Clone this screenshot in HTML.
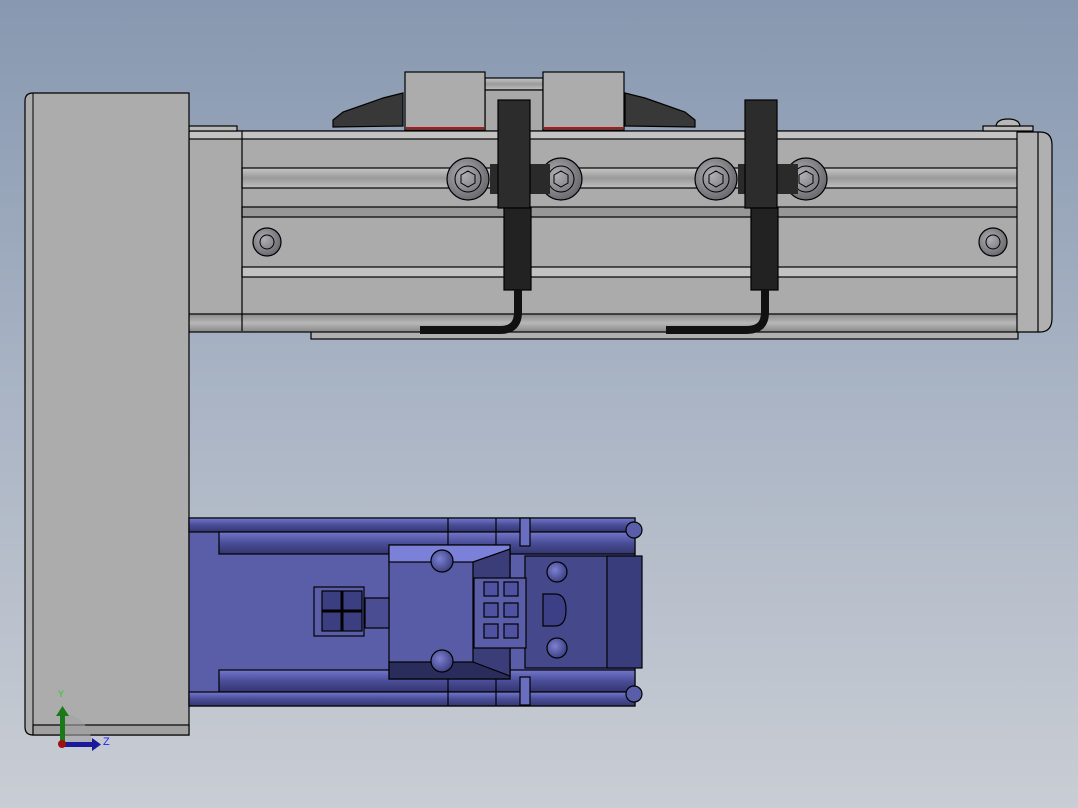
<!DOCTYPE html>
<html><head><meta charset="utf-8"><style>
html,body{margin:0;padding:0;width:1078px;height:808px;overflow:hidden}
body{background:linear-gradient(#8798b0,#a7b2c3 45%,#c9cdd4)}
svg{position:absolute;left:0;top:0}
</style></head><body>
<svg width="1078" height="808" viewBox="0 0 1078 808" xmlns="http://www.w3.org/2000/svg">
<defs>
<linearGradient id="gv" x1="0" y1="0" x2="0" y2="1"><stop offset="0" stop-color="#c8c8c8"/><stop offset=".5" stop-color="#9a9a9a"/><stop offset="1" stop-color="#c0c0c0"/></linearGradient>
<linearGradient id="gb" x1="0" y1="0" x2="0" y2="1"><stop offset="0" stop-color="#8a8a8a"/><stop offset=".5" stop-color="#b8b8b8"/><stop offset="1" stop-color="#888"/></linearGradient>
<linearGradient id="bb" x1="0" y1="0" x2="0" y2="1"><stop offset="0" stop-color="#7478cc"/><stop offset=".5" stop-color="#4a4d98"/><stop offset="1" stop-color="#33366e"/></linearGradient>
<radialGradient id="bolt" cx=".4" cy=".4" r=".7"><stop offset="0" stop-color="#b0b0b4"/><stop offset="1" stop-color="#606066"/></radialGradient>
<radialGradient id="bbolt" cx=".4" cy=".4" r=".7"><stop offset="0" stop-color="#7c80d0"/><stop offset="1" stop-color="#35387a"/></radialGradient>
</defs>
<g stroke="#000" stroke-width="1.2">
<!-- bottom plate -->
<rect x="311" y="318" width="707" height="21" fill="#b0b0b0"/>
<!-- carriage blocks -->
<rect x="485" y="78" width="58" height="12" fill="url(#gv)"/>
<rect x="485" y="90" width="58" height="48" fill="#a8a8a8"/>
<rect x="405" y="72" width="80" height="58" fill="#acacac"/>
<rect x="543" y="72" width="81" height="58" fill="#acacac"/>
<line x1="406" y1="128" x2="484" y2="128" stroke="#b01818" stroke-width="2"/>
<line x1="544" y1="128" x2="623" y2="128" stroke="#b01818" stroke-width="2"/>
<path d="M403 93 L383 98 L343 112 L333 120 L333 127 L403 126 Z" fill="#383838"/>
<path d="M625 93 L645 98 L685 112 L695 120 L695 127 L625 126 Z" fill="#383838"/>
<!-- rail -->
<rect x="189" y="131" width="830" height="200" fill="#ababab"/>
<rect x="189" y="131" width="830" height="8" fill="#c4c4c4"/>
<rect x="242" y="168" width="777" height="20" fill="url(#gv)"/>
<rect x="242" y="207" width="777" height="10" fill="#979797"/>
<rect x="242" y="267" width="777" height="10" fill="#c2c2c2"/>
<rect x="189" y="314" width="830" height="18" fill="url(#gb)"/>
<line x1="242" y1="131" x2="242" y2="331"/>
<path d="M1017 132 H1040 Q1052 132 1052 145 V318 Q1052 332 1040 332 H1017 Z" fill="#b0b0b0"/>
<line x1="1038" y1="132" x2="1038" y2="332"/>
<rect x="189" y="126" width="48" height="5" fill="#b8b8b8"/>
<rect x="983" y="126" width="50" height="5" fill="#b8b8b8"/>
<path d="M996 126 Q997 119 1008 119 Q1019 119 1020 126 Z" fill="#b8b8b8"/>
<!-- left plate -->
<path d="M33 93 H189 V735 H33 Q25 735 25 727 V101 Q25 93 33 93 Z" fill="#acacac"/>
<line x1="33" y1="93" x2="33" y2="735" stroke-width="1"/>
<rect x="33" y="725" width="156" height="10" fill="#a0a0a0"/>
<!-- bolts -->
<g fill="url(#bolt)">
<circle cx="468" cy="179" r="21"/><circle cx="561" cy="179" r="21"/>
<circle cx="716" cy="179" r="21"/><circle cx="806" cy="179" r="21"/>
<circle cx="267" cy="242" r="14"/><circle cx="993" cy="242" r="14"/>
</g>
<g fill="none" stroke-width="1">
<circle cx="468" cy="179" r="13"/><circle cx="561" cy="179" r="13"/><circle cx="716" cy="179" r="13"/><circle cx="806" cy="179" r="13"/>
<path d="M468 171 l7 4 v8 l-7 4 l-7 -4 v-8z M561 171 l7 4 v8 l-7 4 l-7 -4 v-8z M716 171 l7 4 v8 l-7 4 l-7 -4 v-8z M806 171 l7 4 v8 l-7 4 l-7 -4 v-8z"/>
<circle cx="267" cy="242" r="7"/><circle cx="993" cy="242" r="7"/>
</g>
<rect x="490" y="164" width="60" height="30" fill="#2a2a2a" stroke="none"/>
<rect x="738" y="164" width="60" height="30" fill="#2a2a2a" stroke="none"/>
<!-- sensors -->
<rect x="498" y="100" width="32" height="108" fill="#2c2c2c"/>
<rect x="504" y="208" width="27" height="82" fill="#222"/>
<path d="M518 290 V312 Q518 330 500 330 H420" fill="none" stroke="#111" stroke-width="8"/>
<rect x="745" y="100" width="32" height="108" fill="#2c2c2c"/>
<rect x="751" y="208" width="27" height="82" fill="#222"/>
<path d="M765 290 V312 Q765 330 747 330 H666" fill="none" stroke="#111" stroke-width="8"/>
<!-- motor -->
<rect x="189" y="518" width="446" height="188" fill="#5a5ea8"/>
<rect x="189" y="518" width="446" height="14" fill="url(#bb)"/>
<rect x="219" y="532" width="416" height="22" fill="url(#bb)"/>
<rect x="219" y="670" width="416" height="22" fill="url(#bb)"/>
<rect x="189" y="692" width="446" height="14" fill="url(#bb)"/>
<line x1="448" y1="518" x2="448" y2="554"/><line x1="496" y1="518" x2="496" y2="554"/>
<line x1="448" y1="670" x2="448" y2="706"/><line x1="496" y1="670" x2="496" y2="706"/>
<rect x="520" y="518" width="10" height="28" fill="#6a6ec0"/>
<rect x="520" y="677" width="10" height="28" fill="#6a6ec0"/>
<rect x="525" y="556" width="110" height="112" fill="#45488a"/>
<rect x="607" y="556" width="35" height="112" fill="#3a3d7c"/>
<rect x="389" y="545" width="121" height="134" fill="#585ca6"/>
<rect x="389" y="545" width="121" height="17" fill="#7b80d8"/>
<rect x="389" y="662" width="121" height="17" fill="#2a2d5c"/>
<path d="M473 562 L510 549 V676 L473 662 Z" fill="#3a3d78"/>
<circle cx="442" cy="561" r="11" fill="url(#bbolt)"/>
<circle cx="442" cy="661" r="11" fill="url(#bbolt)"/>
<rect x="474" y="578" width="52" height="70" fill="#5a5ea8"/>
<g fill="#4e52a0">
<rect x="484" y="582" width="14" height="14"/><rect x="504" y="582" width="14" height="14"/>
<rect x="484" y="603" width="14" height="14"/><rect x="504" y="603" width="14" height="14"/>
<rect x="484" y="624" width="14" height="14"/><rect x="504" y="624" width="14" height="14"/>
</g>
<path d="M543 594 H555 Q566 594 566 610 Q566 626 555 626 H543 Z" fill="#3c3f86"/>
<circle cx="557" cy="572" r="10" fill="url(#bbolt)"/>
<circle cx="557" cy="648" r="10" fill="url(#bbolt)"/>
<rect x="314" y="587" width="50" height="49" fill="#5a5ea8"/>
<rect x="322" y="591" width="40" height="40" fill="#3b3e80"/>
<path d="M342 591 V631 M322 611 H362" stroke-width="3"/>
<rect x="365" y="598" width="24" height="30" fill="#4a4d92"/>
<circle cx="634" cy="530" r="8" fill="#5a5ea8"/>
<circle cx="634" cy="694" r="8" fill="#5a5ea8"/>
</g>
<!-- triad -->
<path d="M62 745 L62 740 A22 22 0 0 1 84 735" fill="none"/>
<path d="M62 745 A34 34 0 0 1 62 711 L62 745 Z" fill="none"/>
<path d="M62 713 A32 32 0 0 1 92 744 L62 744 Z" fill="#a2a2a4" opacity=".6"/>
<rect x="60" y="715" width="5" height="30" fill="#1a7a1a"/>
<path d="M56 716 L62.5 706 L69 716 Z" fill="#1a7a1a"/>
<rect x="63" y="742" width="30" height="5" fill="#1a1a9a"/>
<path d="M92 738 L101 744.5 L92 751 Z" fill="#1a1a9a"/>
<circle cx="62" cy="744" r="4" fill="#a01010"/>
<text x="58" y="697" font-family="Liberation Sans, sans-serif" font-size="9" fill="#2c2">Y</text>
<text x="103" y="745" font-family="Liberation Sans, sans-serif" font-size="11" fill="#22f">Z</text>
</svg>
</body></html>
